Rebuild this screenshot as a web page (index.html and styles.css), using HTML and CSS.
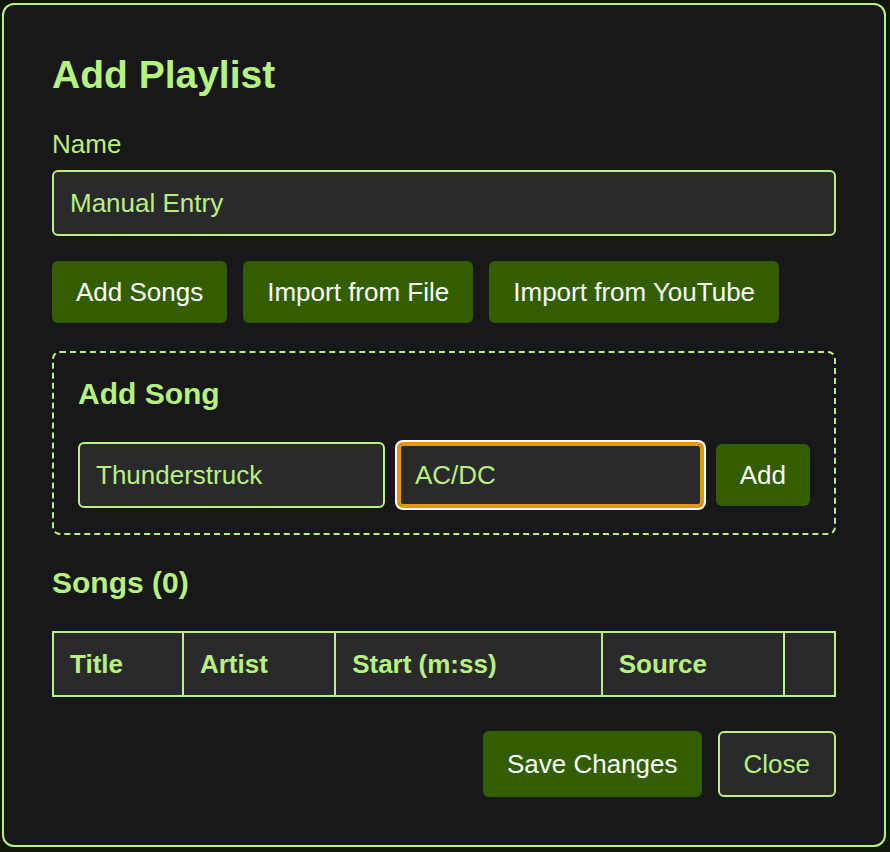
FILE: index.html
```html
<!DOCTYPE html>
<html lang="en">
<head>
  <meta charset="UTF-8">
  <meta name="viewport" content="width=device-width, initial-scale=1.0">
  <title>Add Playlist</title>
  <link rel="stylesheet" href="styles.css">
</head>
<body>
  <div class="modal">
    <h2>Add Playlist</h2>

    <!-- Playlist name -->
    <label class="field-label" for="playlist-name">Name</label>
    <input id="playlist-name" class="text-input" type="text" value="Manual Entry">

    <div class="source-buttons">
      <button class="btn">Add Songs</button>
      <button class="btn">Import from File</button>
      <button class="btn">Import from YouTube</button>
    </div>

    <!-- Manual song entry -->
    <div class="add-song">
      <h3>Add Song</h3>
      <div class="add-song-row">
        <input class="text-input" type="text" value="Thunderstruck">
        <input class="text-input focused" type="text" value="AC/DC">
        <button class="btn">Add</button>
      </div>
    </div>

    <h3>Songs (0)</h3>
    <table class="songs">
      <thead>
        <tr>
          <th>Title</th>
          <th>Artist</th>
          <th>Start (m:ss)</th>
          <th>Source</th>
          <th></th>
        </tr>
      </thead>
      <tbody></tbody>
    </table>

    <div class="actions">
      <button class="btn btn-lg">Save Changes</button>
      <button class="btn btn-lg btn-outline">Close</button>
    </div>
  </div>
</body>
</html>
```

FILE: styles.css
```css
/* General Styles */
body {
  font-family: "Liberation Sans", Arial, sans-serif;
  font-size: 26px;
  margin: 0;
  padding: 3px 4px 6px 2px;
  background-color: #0f170b;
  color: #b5f27e;
}

.modal {
  background: #18181a;
  border: 2px solid #b5f27e;
  border-radius: 12px;
  padding: 48px;
}

h2 {
  font-size: 39px;
  margin: 0 0 32px;
}

h3 {
  font-size: 30px;
  margin: 0 0 31px;
}

.field-label {
  display: block;
  margin-bottom: 10px;
}

.text-input {
  display: block;
  width: 100%;
  box-sizing: border-box;
  padding: 16px;
  font-family: inherit;
  font-size: 26px;
  line-height: 30px;
  color: #b5f27e;
  background: #2a2a2d;
  border: 2px solid #b5f27e;
  border-radius: 6px;
  outline: none;
}

.text-input.focused {
  border-color: #e6970f;
  box-shadow: 0 0 0 2px #fff, inset 0 0 0 2px #e6970f;
}

/* Buttons */
.btn {
  font-family: inherit;
  font-size: 26px;
  line-height: 30px;
  padding: 16px 24px;
  color: #fff;
  background-color: #325e00;
  border: none;
  border-radius: 6px;
  cursor: pointer;
}

.btn-lg {
  padding: 18px 24px;
}

.btn-outline {
  padding: 16px 24px;
  color: #b5f27e;
  background: #2a2a2d;
  border: 2px solid #b5f27e;
}

.source-buttons {
  display: flex;
  gap: 16px;
  margin: 25px 0 28px;
}

.add-song {
  border: 2px dashed #b5f27e;
  border-radius: 8px;
  padding: 24px 24px 25px;
  margin-bottom: 31px;
}

.add-song-row {
  display: flex;
  align-items: center;
  gap: 12px;
}

.add-song-row .text-input {
  flex: 1;
}

/* Songs table */
.songs {
  width: 100%;
  border-collapse: collapse;
  border: 2px solid #b5f27e;
}

.songs th {
  text-align: left;
  padding: 16px;
  line-height: 30px;
  background: #2a2a2d;
  border: 2px solid #b5f27e;
}

.actions {
  display: flex;
  justify-content: flex-end;
  gap: 16px;
  margin-top: 34px;
}
```
